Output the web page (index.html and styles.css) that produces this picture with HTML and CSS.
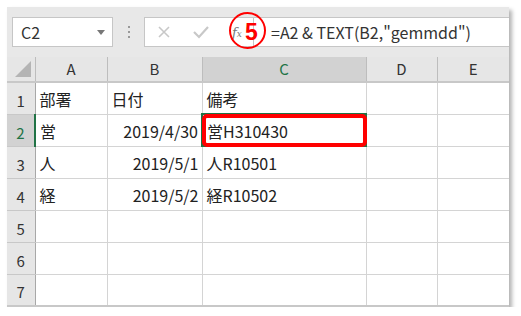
FILE: index.html
```html
<!DOCTYPE html>
<html lang="ja">
<head>
  <meta charset="UTF-8" />
  <title>TEXT関数で和暦</title>
  <link rel="stylesheet" href="styles.css">
</head>
<body>

  <div class="sheet">
    <div class="formula-bar">
      <div class="name-box">
        <span>C2</span>
        <span class="arrow"></span>
      </div>
      <div class="dots"><i></i><i></i><i></i></div>
      <div class="fx-box">
        <svg class="icon" width="14" height="14" viewBox="0 0 14 14">
          <path d="M2 2 L12 12 M12 2 L2 12" stroke="#c8c8c8" stroke-width="1.6" fill="none" />
        </svg>
        <svg class="icon" width="18" height="14" viewBox="0 0 18 14">
          <path d="M2 7 L7 12 L16 2" stroke="#c8c8c8" stroke-width="2.2" fill="none" />
        </svg>
        <span class="fx">f<small>x</small></span>
      </div>
      <div class="formula-input">=A2 &amp; TEXT(B2,"gemmdd")</div>
      <div class="step-mark">5</div>
    </div>

    <table class="grid">
      <colgroup>
        <col style="width:28px">
        <col style="width:72px">
        <col style="width:95px">
        <col style="width:164px">
        <col style="width:71px">
        <col style="width:72px">
      </colgroup>
      <thead>
        <tr>
          <th class="corner"><span class="tri"></span></th>
          <th>A</th>
          <th>B</th>
          <th class="sel-col">C</th>
          <th>D</th>
          <th>E</th>
        </tr>
      </thead>
      <tbody>
        <tr>
          <th>1</th>
          <td>部署</td>
          <td>日付</td>
          <td>備考</td>
          <td></td>
          <td></td>
        </tr>
        <tr>
          <th class="sel-row">2</th>
          <td>営</td>
          <td class="num">2019/4/30</td>
          <td class="active">営H310430<span class="highlight"></span></td>
          <td></td>
          <td></td>
        </tr>
        <tr>
          <th>3</th>
          <td>人</td>
          <td class="num">2019/5/1</td>
          <td>人R10501</td>
          <td></td>
          <td></td>
        </tr>
        <tr>
          <th>4</th>
          <td>経</td>
          <td class="num">2019/5/2</td>
          <td>経R10502</td>
          <td></td>
          <td></td>
        </tr>
        <tr><th>5</th><td></td><td></td><td></td><td></td><td></td></tr>
        <tr><th>6</th><td></td><td></td><td></td><td></td><td></td></tr>
        <tr><th>7</th><td></td><td></td><td></td><td></td><td></td></tr>
      </tbody>
    </table>
  </div>

</body>
</html>
```

FILE: styles.css
```css
body {
  margin: 0;
  background: #fff;
  font-family: "Noto Sans CJK JP", "Noto Sans", sans-serif;
  color: #222;
}

.sheet {
  margin: 7px 0 0 7px;
  width: 502px;
  background: #fff;
  box-shadow: 3px 3px 4px rgba(0, 0, 0, 0.3);
}

/* 数式バー */
.formula-bar {
  position: relative;
  height: 50px;
  box-sizing: border-box;
  padding: 10px 0 0 5px;
  background: #e8e8e8;
  display: flex;
  align-items: flex-start;
}

.name-box {
  width: 101px;
  height: 30px;
  box-sizing: border-box;
  background: #fff;
  border: 1px solid #c6c6c6;
  display: flex;
  align-items: center;
  justify-content: space-between;
  padding: 0 7px 0 8px;
  font-size: 16px;
  color: #333;
}

.arrow {
  width: 0;
  height: 0;
  border-left: 4px solid transparent;
  border-right: 4px solid transparent;
  border-top: 5px solid #777;
}

.dots {
  width: 31px;
  height: 30px;
  display: flex;
  flex-direction: column;
  align-items: center;
  justify-content: center;
  gap: 3px;
}

.dots i {
  width: 2px;
  height: 2px;
  background: #999;
}

.fx-box {
  width: 110px;
  height: 30px;
  box-sizing: border-box;
  background: #fff;
  border: 1px solid #c6c6c6;
  display: flex;
  align-items: center;
  padding-left: 12px;
  gap: 21px;
}

.fx {
  font-family: "DejaVu Serif", serif;
  font-style: italic;
  font-size: 13px;
  color: #777;
  margin-left: 1px;
}

.fx small {
  font-size: 9px;
}

.formula-input {
  flex: 1;
  height: 30px;
  box-sizing: border-box;
  background: #fff;
  border: 1px solid #c6c6c6;
  border-left: none;
  border-right: none;
  padding-left: 17px;
  font-size: 16px;
  line-height: 28px;
  color: #333;
}

.step-mark {
  position: absolute;
  left: 222px;
  top: 5px;
  width: 33px;
  height: 33px;
  border: 2.5px solid #f00;
  border-radius: 50%;
  color: #f00;
  font-family: "Liberation Sans", sans-serif;
  font-weight: bold;
  font-size: 23px;
  line-height: 36px;
  text-align: center;
  text-indent: 8px;
}

/* シート */
.grid {
  border-collapse: collapse;
  table-layout: fixed;
  width: 502px;
}

.grid tr {
  height: 32px;
}

.grid thead tr {
  height: 25px;
}

.grid th {
  background: #e6e6e6;
  font-weight: normal;
  font-size: 15px;
  line-height: 18px;
  color: #333;
  border: 1px solid #bdbdbd;
  border-top: none;
  padding: 0;
}

.grid thead th {
  border-bottom: 1px solid #a8a8a8;
  border-left-color: #d0d0d0;
}

.grid thead th:first-child {
  border-left: none;
}

.grid thead th:last-child {
  border-right: none;
}

.grid tbody th {
  border-left: none;
  border-right: 1px solid #a8a8a8;
  border-bottom: 1px solid #c8c8c8;
  padding-top: 5px;
}

.grid thead th.sel-col {
  background: #d2d2d2;
  color: #217346;
  border-bottom: 2px solid #217346;
}

.grid tbody th.sel-row {
  background: #d2d2d2;
  color: #217346;
  border-right: 2px solid #217346;
}

.corner {
  position: relative;
}

.tri {
  position: absolute;
  right: 4px;
  bottom: 4px;
  width: 0;
  height: 0;
  border-left: 16px solid transparent;
  border-bottom: 16px solid #b4b4b4;
}

.grid td {
  border: 1px solid #d4d4d4;
  padding: 2px 3px 0 4px;
  font-size: 16px;
  line-height: 20px;
  white-space: nowrap;
  overflow: visible;
}

.grid tr:last-child td,
.grid tr:last-child th {
  border-bottom: 2px solid #c8c8c8;
}

.grid td:last-child {
  border-right: none;
}

.grid td.num {
  text-align: right;
}

.grid td.active {
  position: relative;
  border: 2px solid #217346;
}

.highlight {
  position: absolute;
  left: -1px;
  top: -1px;
  right: -2px;
  bottom: -2px;
  border: 4px solid #f00;
  border-radius: 5px;
}
```
